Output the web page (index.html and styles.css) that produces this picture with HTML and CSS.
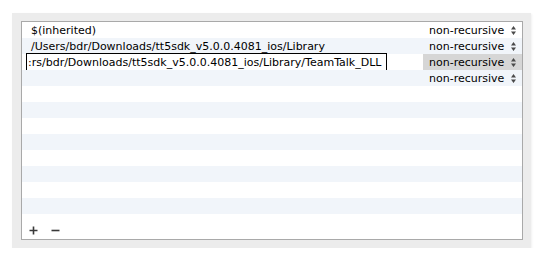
FILE: index.html
```html
<!DOCTYPE html>
<html lang="en">
<head>
    <meta charset="UTF-8">
    <title>Search Paths</title>
    <link rel="stylesheet" href="styles.css">
</head>
<body>
    <div class="panel">
        <div class="table">
            <div class="rows">
                <div class="row">
                    <div class="path">$(inherited)</div>
                    <div class="mode">non-recursive <svg class="arrows" width="5" height="9" viewBox="0 0 5 9"><path d="M2.5 0L5 3.5H0z M2.5 9L5 5.5H0z" fill="#4a4a4a"/></svg></div>
                </div>
                <div class="row">
                    <div class="path">/Users/bdr/Downloads/tt5sdk_v5.0.0.4081_ios/Library</div>
                    <div class="mode">non-recursive <svg class="arrows" width="5" height="9" viewBox="0 0 5 9"><path d="M2.5 0L5 3.5H0z M2.5 9L5 5.5H0z" fill="#4a4a4a"/></svg></div>
                </div>
                <div class="row row-edit">
                    <div class="path-edit">:rs/bdr/Downloads/tt5sdk_v5.0.0.4081_ios/Library/TeamTalk_DLL</div>
                    <div class="mode mode-active">non-recursive <svg class="arrows" width="5" height="9" viewBox="0 0 5 9"><path d="M2.5 0L5 3.5H0z M2.5 9L5 5.5H0z" fill="#4a4a4a"/></svg></div>
                </div>
                <div class="row">
                    <div class="path"></div>
                    <div class="mode">non-recursive <svg class="arrows" width="5" height="9" viewBox="0 0 5 9"><path d="M2.5 0L5 3.5H0z M2.5 9L5 5.5H0z" fill="#4a4a4a"/></svg></div>
                </div>
                <div class="row"></div>
                <div class="row"></div>
                <div class="row"></div>
                <div class="row"></div>
                <div class="row"></div>
                <div class="row"></div>
                <div class="row"></div>
                <div class="row"></div>
            </div>
            <div class="footer">
                <button class="tool-btn" title="Add">
                    <svg width="9" height="9" viewBox="0 0 9 9"><path d="M4.5 0.5v8M0.5 4.5h8" stroke="#3a3a3a" stroke-width="1.6"/></svg>
                </button>
                <button class="tool-btn" title="Remove">
                    <svg width="9" height="9" viewBox="0 0 9 9"><path d="M0.5 4.5h8" stroke="#3a3a3a" stroke-width="1.6"/></svg>
                </button>
            </div>
        </div>
    </div>
</body>
</html>
```

FILE: styles.css
```css
* {
    margin: 0;
    padding: 0;
    box-sizing: border-box;
}

body {
    background: #ffffff;
    font-family: 'DejaVu Sans', 'Liberation Sans', sans-serif;
    font-size: 11px;
    color: #000;
    padding: 13px 0 0 12px;
}

.panel {
    width: 519px;
    height: 235px;
    background: #ececec;
    padding: 8px 8px 8px 9px;
    box-shadow: 1px 1px 2px rgba(0, 0, 0, 0.06);
}

.table {
    width: 502px;
    height: 219px;
    background: #fff;
    border: 1px solid #a9a9a9;
    display: flex;
    flex-direction: column;
}

.rows {
    display: flex;
    flex-direction: column;
}

.row {
    height: 16px;
    display: flex;
    align-items: center;
}

.row:nth-child(even) {
    background: #f1f5fa;
}

.path {
    flex: 1;
    padding-left: 9px;
    white-space: nowrap;
}

.row-edit {
    background: #fff;
}

.path-edit {
    width: 361px;
    height: 18px;
    margin-left: 4px;
    margin-right: 36px;
    border: 1px solid #000;
    background: #fff;
    display: flex;
    align-items: center;
    white-space: nowrap;
    padding-left: 1px;
}

.mode {
    width: 99px;
    height: 16px;
    margin-left: auto;
    padding-left: 6px;
    display: flex;
    align-items: center;
    white-space: nowrap;
}

.mode-active {
    background: #d6d6d6;
}

.arrows {
    margin-left: 7px;
}

.footer {
    flex: 1;
    display: flex;
    align-items: flex-end;
    gap: 13px;
    padding: 0 0 4px 7px;
}

.tool-btn {
    border: none;
    background: none;
    width: 9px;
    height: 9px;
    display: flex;
}
```
